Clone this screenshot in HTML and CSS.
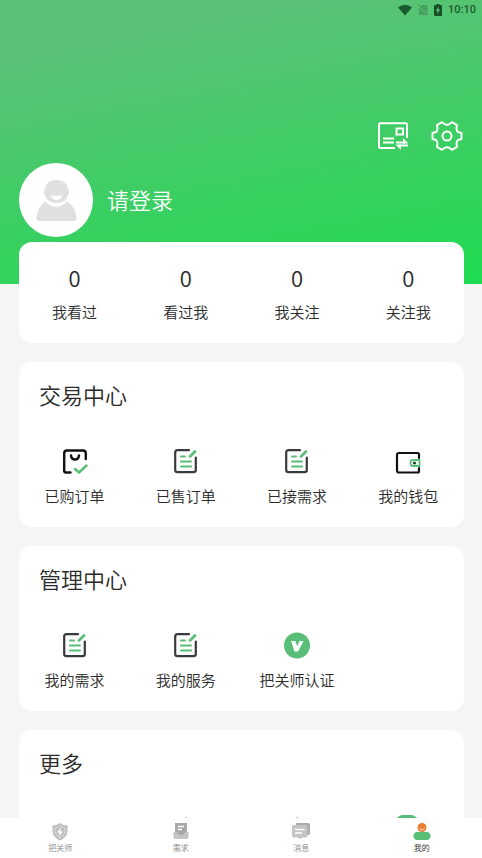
FILE: index.html
```
<!DOCTYPE html>
<html lang="zh-CN">
<head>
<meta charset="utf-8">
<meta name="viewport" content="width=device-width, initial-scale=1">
<title>我的</title>
<link rel="stylesheet" href="styles.css">
</head>
<body>
<svg class="sprite" aria-hidden="true">
  <symbol id="i-doc" viewBox="0 0 28 28">
    <g fill="none" stroke-linecap="round" stroke-linejoin="round">
      <path d="M17 3.200H5.500Q3.200 3.200 3.200 5.500V23Q3.200 25.200 5.500 25.200H21.500Q23.800 25.200 23.800 23V10.500" stroke="#383a40" stroke-width="2.200"/>
      <path d="M9 9.500h4M9 14.500h10M9 19.500h10" stroke="#59be78" stroke-width="2"/>
      <path d="M18 9.500L23 4.500" stroke="#59be78" stroke-width="2.800"/>
    </g>
  </symbol>
</svg>
<div class="app">
  <main class="page">
    <div class="status">
      <svg width="14" height="12" viewBox="0 0 14 12"><path d="M0 3.500Q7-2 14 3.500L7 11.500Z" fill="#1b5a2e"/></svg>
      <svg width="10" height="12" viewBox="0 0 10 12"><path d="M9.500 1v10H1V4l3-3Z" fill="#459f5f"/><path d="M0 1l10 10" stroke="#5cc179" stroke-width="2"/><path d="M0 0l10 11" stroke="#3a8c52"/></svg>
      <svg width="8" height="12" viewBox="0 0 8 12"><path d="M2.500 0h3v1H7q1 0 1 1v9q0 1-1 1H1q-1 0-1-1V2q0-1 1-1h1.500Z" fill="#174f29"/><path d="M4.500 2.500L2 7h1.500v3L6 5.500H4.500Z" fill="#5cc179"/></svg>
      <span>10:10</span>
    </div>
    <div class="tools">
      <button type="button" aria-label="名片">
        <svg width="32" height="32" viewBox="0 0 32 32" fill="none" stroke="#fff" stroke-width="2">
          <path d="M18 28H3.500Q2 28 2 26.500V5Q2 3.200 3.500 3.200H28.500Q30 3.200 30 5V18"/>
          <path d="M19.500 8.500h6.500v6h-6.500zM6 18.500h11M6 22.500h11"/>
          <path d="M19 22.500h9M31 25.500h-9" stroke-width="2.200"/>
          <path d="M26 18l5.500 5.500H26ZM24 30l-5.500-5.500H24Z" fill="#fff" stroke="none"/>
        </svg>
      </button>
      <button type="button" aria-label="设置">
        <svg width="32" height="32" viewBox="0 0 32 32" fill="none" stroke="#fff" stroke-width="2" stroke-linejoin="round">
          <path d="M11 2.200L14 4.300Q16 5.200 18 4.300L21 2.200L26 5.200Q24.800 10.500 27 12L30.500 13V19L27 20Q24.800 21.500 26 26.800L21 29.800L18 27.700Q16 26.800 14 27.700L11 29.800L6 26.800Q7.200 21.500 5 20L1.500 19V13L5 12Q7.200 10.500 6 5.200Z"/>
          <circle cx="16" cy="16" r="4.500"/>
        </svg>
      </button>
    </div>
    <a class="profile" href="#login">
      <svg class="avatar" width="74" height="74" viewBox="0 0 74 74">
        <circle cx="37" cy="37" r="37" fill="#fff"/>
        <path d="M26 26Q27 17 37.500 17T49 26Q51 29 49 32Q47 40 37.500 40T26 32Q24 29 26 26Z" fill="#e0e0e0"/>
        <path d="M31.500 32Q37.500 34 43.500 32Q42 37 37.500 37T31.500 32Z" fill="#fff"/>
        <path d="M26 38.500Q37.500 49 48 38.500Q56 43 57.500 54Q58 58 54 58H21Q17 58 17.500 54Q19 43 26 38.500Z" fill="#e0e0e0"/>
      </svg>
      <span>请登录</span>
    </a>
    <section class="card stats">
      <a href="#seen"><b>0</b><span>我看过</span></a>
      <a href="#viewers"><b>0</b><span>看过我</span></a>
      <a href="#following"><b>0</b><span>我关注</span></a>
      <a href="#followers"><b>0</b><span>关注我</span></a>
    </section>
    <section class="card">
      <h2>交易中心</h2>
      <div class="grid">
        <a href="#bought">
          <svg class="icon" viewBox="0 0 28 28" fill="none" stroke-linecap="round" stroke-linejoin="round">
            <path d="M9.500 25.500H5Q3.200 25.500 3.200 23.500V6.500Q3.200 3.500 6 3.500H22Q24.800 3.500 24.800 6.500V12" stroke="#111" stroke-width="2.400"/>
            <path d="M10 8.500Q10.500 12.500 14 12.500T18 8.500" stroke="#111" stroke-width="2.400"/>
            <path d="M14 22l4 3.500L25.500 18.500" stroke="#59be78" stroke-width="2.400"/>
          </svg>
          <span>已购订单</span></a>
        <a href="#sold"><svg class="icon"><use href="#i-doc"/></svg><span>已售订单</span></a>
        <a href="#accepted"><svg class="icon"><use href="#i-doc"/></svg><span>已接需求</span></a>
        <a href="#wallet">
          <svg class="icon" viewBox="0 0 28 28" fill="none" stroke-linecap="round" stroke-linejoin="round">
            <path d="M25 11V7.500Q25 6 23.500 6H5Q3 6 3 8V23.500Q3 25.500 5 25.500H23.500Q25 25.500 25 24V21" stroke="#111" stroke-width="2.200"/>
            <path d="M25.500 13H19Q16.500 13 16.500 16T19 19H25.500Z" stroke="#59be78" stroke-width="1.800"/>
            <circle cx="20.500" cy="16" r="1.600" fill="#173f24"/>
          </svg>
          <span>我的钱包</span></a>
      </div>
    </section>
    <section class="card">
      <h2>管理中心</h2>
      <div class="grid">
        <a href="#needs"><svg class="icon"><use href="#i-doc"/></svg><span>我的需求</span></a>
        <a href="#services"><svg class="icon"><use href="#i-doc"/></svg><span>我的服务</span></a>
        <a href="#verify">
          <svg class="icon" viewBox="0 0 28 28"><circle cx="14" cy="14.500" r="13" fill="#59be78"/><path d="M8 10h4.300l2 5.200L16.500 10h4.200L15 20.500h-3.500Z" fill="#fff"/></svg>
          <span>把关师认证</span></a>
      </div>
    </section>
    <section class="card">
      <h2>更多</h2>
      <div class="grid">
        <i></i>
        <svg class="icon" viewBox="0 0 28 28"><path d="M12 3.500L15 2v3Z" fill="#59be78"/></svg>
        <svg class="icon" viewBox="0 0 28 28"><path d="M12 3.500L15 2v3Z" fill="#59be78"/></svg>
        <svg class="icon" viewBox="0 0 28 28"><ellipse cx="13" cy="12" rx="14" ry="13" fill="#59be78"/></svg>
      </div>
    </section>
  </main>
  <nav class="tabs">
    <a href="#home">
      <svg width="20" height="18" viewBox="0 0 20 18"><path d="M10 0Q13.500 2.500 17.500 2.500V8Q17.500 14 10 17.500Q2.500 14 2.500 8V2.500Q6.500 2.500 10 0Z" fill="#bdbdbd"/><path d="M10 3Q12 4.800 15 5V8.500Q15 12 10 14.800Q5 12 5 8.500V5Q8 4.800 10 3Z" fill="none" stroke="#e0e0e0"/><path d="M11 4.500L7 9.500h2.500L9 13.500L13 8.500h-2.500Z" fill="#fff"/></svg>
      <span>把关师</span></a>
    <a href="#demand">
      <svg width="20" height="18" viewBox="0 0 20 18"><path d="M4 0h12v12H4Z" fill="#a9a9a9"/><path d="M7 3.500h6M7 6.500h4" stroke="#fff" stroke-width="1.500"/><path d="M2.500 8.500L6 9.500Q7 12 10 12T14 9.500L17.500 8.500V14Q17.500 16 15.500 16h-11Q2.500 16 2.500 14Z" fill="#c4c4c4"/></svg>
      <span>需求</span></a>
    <a href="#messages">
      <svg width="20" height="18" viewBox="0 0 20 18"><path d="M5 0h12q2 0 2 2v8q0 2-2 2H5Z" fill="#aaa"/><path d="M3 2h11.500q2 0 2 2v8.500q0 2-2 2h-3L9 16l-2.500-1.500H3q-2 0-2-2V4q0-2 2-2Z" fill="#c4c4c4"/><path d="M4 6.500h9.500M4 10h7" stroke="#fff" stroke-width="1.500"/></svg>
      <span>消息</span></a>
    <a class="on" href="#me">
      <svg width="20" height="18" viewBox="0 0 20 18"><circle cx="10" cy="4.500" r="4.500" fill="#e97d32"/><path d="M7.500 5.500Q10 8.500 12.500 5.500" stroke="#ffe0c0" fill="none"/><rect x="1.500" y="9" width="17" height="8" rx="4" fill="#59be78"/></svg>
      <span>我的</span></a>
  </nav>
</div>
</body>
</html>
```
FILE: styles.css
```
* { box-sizing: border-box; }
body {
  margin: 0;
  background: #f5f5f5;
  color: #2b2b2b;
  font-family: "Noto Sans CJK SC", sans-serif;
  font-size: 15px;
  font-weight: 350;
  line-height: 20px;
}
a { color: inherit; text-decoration: none; }
svg { display: block; }
.sprite { position: absolute; width: 0; height: 0; }
.app { display: flex; flex-direction: column; height: 100vh; }
.page {
  flex: 1;
  min-height: 0;
  overflow-y: auto;
  scrollbar-width: none;
  padding: 0 18px 19px 19px;
  background: linear-gradient(169deg, #5bc177 16%, #1edb50 100%) no-repeat 0 0 / 100% 284px;
}
.status {
  display: flex;
  justify-content: flex-end;
  align-items: center;
  gap: 6px;
  height: 20px;
  margin-right: -12px;
  color: #1b5a2e;
  font: 500 11px/20px Roboto, sans-serif;
}
.tools {
  display: flex;
  justify-content: flex-end;
  gap: 22px;
  margin: 100px 1px 0 0;
}
.tools button { border: 0; padding: 0; background: none; }
.profile {
  display: flex;
  align-items: center;
  gap: 14px;
  margin: 11px 0 5px;
  color: #fff;
  font-size: 22px;
}
.profile span { padding-bottom: 3px; }
.card {
  margin-bottom: 19px;
  padding: 17px 0 21px;
  border-radius: 13px;
  background: #fff;
}
.card h2 {
  margin: 0 20px 38px;
  font-size: 22px;
  line-height: 30px;
  font-weight: inherit;
}
.grid, .stats { display: grid; grid-template-columns: repeat(4, 1fr); }
.grid { justify-items: center; }
.grid a, .stats a {
  display: flex;
  flex-direction: column;
  align-items: center;
  gap: 11px;
  white-space: nowrap;
}
.stats { padding: 20px 0 21px; }
.stats a { gap: 10px; }
.stats b { font-size: 22px; line-height: 30px; font-weight: inherit; }
.icon { width: 28px; height: 28px; }
.tabs {
  display: grid;
  grid-template-columns: repeat(4, 1fr);
  height: 40px;
  padding-top: 5px;
  background: #fff;
  color: #888;
  font-size: 8px;
  line-height: 12px;
}
.tabs a {
  display: flex;
  flex-direction: column;
  align-items: center;
  gap: 1px;
}
.tabs .on { color: #222; }
```
